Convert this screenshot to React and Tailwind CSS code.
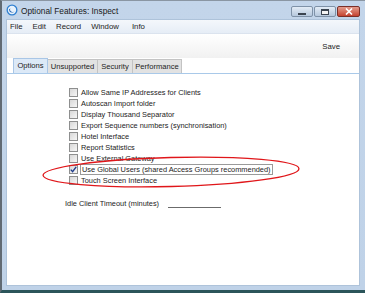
import React from 'react'

const font = { fontFamily: '"Liberation Sans", Arial, sans-serif' }

const options = [
  { label: 'Allow Same IP Addresses for Clients' },
  { label: 'Autoscan Import folder' },
  { label: 'Display Thousand Separator' },
  { label: 'Export Sequence numbers (synchronisation)' },
  { label: 'Hotel Interface' },
  { label: 'Report Statistics' },
  { label: 'Use External Gateway' },
  { label: 'Use Global Users (shared Access Groups recommended)', checked: true, focus: true },
  { label: 'Touch Screen Interface' },
]

const tabs = [
  { name: 'Options', w: 'w-[35px]' },
  { name: 'Unsupported', w: 'w-[50px]' },
  { name: 'Security', w: 'w-[35px]' },
  { name: 'Performance', w: 'w-[49px]' },
]
const menus = [
  { name: 'File', ml: 'ml-[3px]' },
  { name: 'Edit', ml: 'ml-[10px]' },
  { name: 'Record', ml: 'ml-[10px]' },
  { name: 'Window', ml: 'ml-[10px]' },
  { name: 'Info', ml: 'ml-[13px]' },
]

const AppIcon = () => (
  <svg width="12" height="12" viewBox="0 0 12 12">
    <circle cx="6" cy="6" r="5.5" fill="#2f7fd0" />
    <circle cx="6" cy="6" r="4.2" fill="#e8f2fc" />
    <path d="M3 5.5 A3.2 3.2 0 0 0 9.2 6.5 A2.6 2.6 0 0 1 4.4 4.2 Z" fill="#1d5fae" />
  </svg>
)

const WinButton = ({ kind }) => {
  if (kind === 'close') {
    return (
      <div className="w-[23px] h-[11px] rounded-[2px] border border-[#7a2f28] bg-gradient-to-b from-[#e39b8c] to-[#c4412f] flex items-center justify-center">
        <svg width="8" height="7" viewBox="0 0 8 7">
          <path d="M1 0.5 L7 6.5 M7 0.5 L1 6.5" stroke="#fff" strokeWidth="1.6" />
        </svg>
      </div>
    )
  }
  return (
    <div className="w-[22px] h-[11px] rounded-[2px] border border-[#7f92a8] bg-gradient-to-b from-[#e3ecf6] to-[#b6c8dd] flex items-center justify-center">
      {kind === 'min' ? (
        <div className="w-[8px] h-[2px] mt-[4px] bg-[#f4f4f4] border border-[#3b4450]" />
      ) : (
        <div className="w-[8px] h-[6px] border border-[#3b4450] border-t-2 bg-[#f4f4f4]" />
      )}
    </div>
  )
}

const Checkbox = ({ checked }) => (
  <div className="w-[9px] h-[9px] border border-[#8e8f8f] bg-gradient-to-br from-[#d8d8d8] to-[#f6f6f6] flex items-center justify-center shrink-0">
    {checked && (
      <svg width="7" height="7" viewBox="0 0 7 7">
        <path d="M0.8 3.6 L2.6 5.6 L6.2 0.8" stroke="#1f3d8c" strokeWidth="1.4" fill="none" />
      </svg>
    )}
  </div>
)

const App = () => {
  return (
    <div
      className="relative w-[365px] h-[293px] overflow-hidden bg-gradient-to-b from-[#c3d5ea] to-[#bfd2e8] border-l-2 border-l-[#616a73] border-t border-t-[#8a96a3] border-b-[3px] border-b-[#2b555a] flex flex-col text-[#1c1c1c]"
      style={font}
    >
      {/* title bar */}
      <div className="h-[18px] flex items-center pl-[4px] pr-[5px]">
        <AppIcon />
        <span className="ml-[3px] text-[8.3px] text-[#1a1a1a] mt-[2px]">Optional Features: Inspect</span>
        <div className="ml-auto flex gap-[1px] mt-[3px]">
          <WinButton kind="min" />
          <WinButton kind="max" />
          <WinButton kind="close" />
        </div>
      </div>

      {/* client area */}
      <div className="flex-1 flex flex-col ml-[4px] mr-[5px] mb-[4px] bg-white border border-[#aec3da]">
        <div className="h-[14px] flex items-center bg-gradient-to-b from-[#f4f7fb] to-[#e6edf6] border-b border-[#dbe3ee] text-[7.8px]">
          {menus.map((m) => (
            <span key={m.name} className={m.ml}>
              {m.name}
            </span>
          ))}
        </div>

        <div className="h-[24px] flex items-center justify-end pr-[19px] bg-gradient-to-b from-white to-[#f1f1f1] text-[7.8px]">
          <span className="mt-[1px]">Save</span>
        </div>

        <div className="flex items-end h-[16px] pl-[6px] pr-[4px] border-b border-[#a9c9e9]">
          {tabs.map((t, i) => (
            <div
              key={t.name}
              className={
                i === 0
                  ? `h-[15px] ${t.w} flex items-center justify-center bg-[#dce9f7] border border-b-0 border-[#a9c6e6] text-[7.6px]`
                  : `h-[14px] ${t.w} flex items-center justify-center bg-[#e2e2e2] border border-b-0 border-l-0 border-[#c3c3c3] text-[7.6px]`
              }
            >
              {t.name}
            </div>
          ))}
        </div>

        <div className="flex-1 pt-[13px] pl-[62px]">
          <div className="flex flex-col">
            {options.map((o) => (
              <div key={o.label} className="h-[11px] flex items-center">
                <Checkbox checked={o.checked} />
                <span
                  className={
                    o.focus
                      ? 'ml-[2px] px-[1px] leading-[9px] text-[7.4px] border border-[#9a9a9a]'
                      : 'ml-[3px] leading-[9px] text-[7.4px]'
                  }
                >
                  {o.label}
                </span>
              </div>
            ))}
          </div>
          <div className="flex items-center mt-[12px] -ml-[4px] h-[11px]">
            <span className="text-[7.4px]">Idle Client Timeout (minutes)</span>
            <div className="ml-[9px] w-[53px] h-[8px] border-b border-[#6b6b6b]" />
          </div>
        </div>
      </div>

      {/* red annotation ellipse */}
      <svg className="absolute left-0 top-0 pointer-events-none" width="365" height="293" viewBox="0 0 365 293">
        <ellipse
          cx="169"
          cy="171"
          rx="128"
          ry="14.5"
          transform="rotate(-1.5 169 171)"
          fill="none"
          stroke="#e0161a"
          strokeWidth="1.3"
        />
      </svg>
    </div>
  )
}

export default App
